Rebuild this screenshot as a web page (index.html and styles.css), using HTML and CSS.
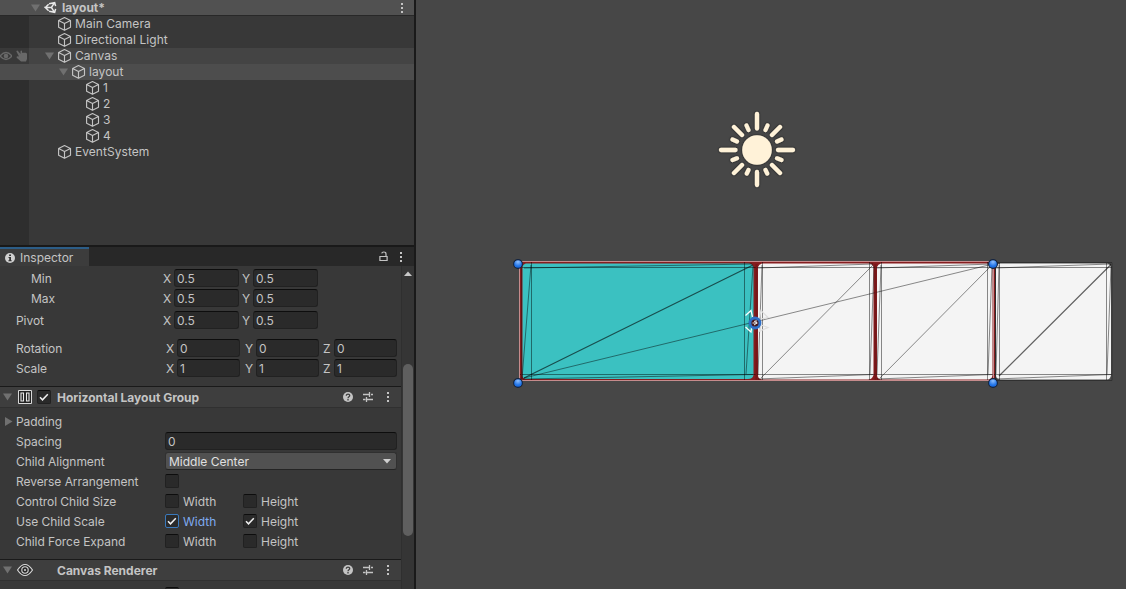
FILE: index.html
```html
<!DOCTYPE html>
<html lang="en">
<head>
  <meta charset="UTF-8" />
  <title>layout</title>
  <link rel="stylesheet" href="styles.css">
</head>
<body>
  <svg class="defs" width="0" height="0">
    <symbol id="cube" viewBox="0 0 14 14">
      <path d="M6.500 .6 12.500 3.400V10.300L6.500 13.300 .6 10.300V3.400ZM.6 3.400 6.500 6.400 12.500 3.400M6.500 6.400V13.300" fill="none" stroke="#c4c4c4" stroke-width="1.15" stroke-linejoin="round"/>
    </symbol>
    <symbol id="down" viewBox="0 0 9 8"><path d="M0 .5H9L4.5 7.5Z" fill="#707070"/></symbol>
    <symbol id="right" viewBox="0 0 9 9"><path d="M1 0V9L8.5 4.5Z" fill="#707070"/></symbol>
    <symbol id="dots" viewBox="0 0 4 12"><path d="M1 1h2v2H1zM1 5h2v2H1zM1 9h2v2H1z" fill="#c4c4c4"/></symbol>
    <symbol id="check" viewBox="0 0 14 14"><path d="M3 7.3 5.5 9.8 10.8 4.2" fill="none" stroke="#f0f0f0" stroke-width="1.5"/></symbol>
    <symbol id="help" viewBox="0 0 10 10">
      <circle cx="5" cy="5" r="5" fill="#c4c4c4"/>
      <path d="M3.3 3.8C3.3 1.6 6.8 1.7 6.7 3.7 6.6 4.8 5 4.7 5 6.2M5 7.1V8.4" fill="none" stroke="#3e3e3e" stroke-width="1.3"/>
    </symbol>
    <symbol id="preset" viewBox="0 0 10 10">
      <path d="M0 2.500H6M8 2.500H10M6.500 0V5M0 7.500H2.500M4 7.500H10M3.500 5V10" fill="none" stroke="#c4c4c4" stroke-width="1.300"/>
    </symbol>
  </svg>

  <div class="editor">
    <aside class="side">
      <section class="hierarchy">
        <div class="scene-row">
          <svg class="fold"><use href="#down"/></svg>
          <svg class="unity" viewBox="0 0 14 14">
            <path d="M1.500 7 5 3.500M5.500 3 11.500 1.800 12.500 5.500M12.500 8.500 11.500 12.200 5.500 11M5 10.500 1.500 7H8L11 2.300M8 7 11 11.700" fill="none" stroke="#e8e8e8" stroke-width="1.600"/>
          </svg>
          <b>layout*</b>
          <svg class="dots"><use href="#dots"/></svg>
        </div>
        <div class="tree">
          <div class="item"><svg class="cube"><use href="#cube"/></svg>Main Camera</div>
          <div class="item"><svg class="cube"><use href="#cube"/></svg>Directional Light</div>
          <div class="item hover">
            <span class="vis">
              <svg width="12" height="10" viewBox="0 0 12 10"><path d="M0 5Q6-2 12 5 6 12 0 5Z" fill="none" stroke="#686868" stroke-width="1.300"/><circle cx="6" cy="5" r="2.300" fill="#686868"/></svg>
              <svg width="12" height="12" viewBox="0 0 12 12"><path d="M.3 1.200Q1.200 0 2.200 1.200L4.500 4V1Q5.300 0 6 1V3Q7 2 8 3 9 2 10 3 11 3 11 4V9L10 11.500H5L1 8Q-.2 6.500 1.800 6.300L3 6.500Z" fill="#686868"/></svg>
            </span>
            <svg class="fold"><use href="#down"/></svg><svg class="cube"><use href="#cube"/></svg>Canvas
          </div>
          <div class="item l2 selected"><svg class="fold"><use href="#down"/></svg><svg class="cube"><use href="#cube"/></svg>layout</div>
          <div class="item l3"><svg class="cube"><use href="#cube"/></svg>1</div>
          <div class="item l3"><svg class="cube"><use href="#cube"/></svg>2</div>
          <div class="item l3"><svg class="cube"><use href="#cube"/></svg>3</div>
          <div class="item l3"><svg class="cube"><use href="#cube"/></svg>4</div>
          <div class="item"><svg class="cube"><use href="#cube"/></svg>EventSystem</div>
        </div>
      </section>

      <section class="inspector">
        <div class="tabs">
          <div class="tab">
            <svg width="10" height="10" viewBox="0 0 10 10"><circle cx="5" cy="5" r="5" fill="#d0d0d0"/><path d="M4.100 1.500H6V3.100H4.100ZM3.500 4H6V7.200H6.700V8.300H3.400V7.200H4.200V5.100H3.500Z" fill="#333"/></svg>
            Inspector
          </div>
          <svg class="lock" viewBox="0 0 9 11"><path d="M.9 5.500H8.100V9.500H.9ZM7 5.500V3Q7 1 4.800 1 3 1 2.700 2.400" fill="none" stroke="#c4c4c4" stroke-width="1.200"/></svg>
          <svg class="dots"><use href="#dots"/></svg>
        </div>
        <div class="inspector-body">
          <div class="props">
            <div class="row indent"><label>Min</label><div class="vec two"><i>X</i><span class="field">0.5</span><i>Y</i><span class="field">0.5</span></div></div>
            <div class="row indent"><label>Max</label><div class="vec two"><i>X</i><span class="field">0.5</span><i>Y</i><span class="field">0.5</span></div></div>
            <div class="row pivot"><label>Pivot</label><div class="vec two"><i>X</i><span class="field">0.5</span><i>Y</i><span class="field">0.5</span></div></div>
            <div class="row rotation"><label>Rotation</label><div class="vec"><i>X</i><span class="field">0</span><i>Y</i><span class="field">0</span><i>Z</i><span class="field">0</span></div></div>
            <div class="row"><label>Scale</label><div class="vec"><i>X</i><span class="field">1</span><i>Y</i><span class="field">1</span><i>Z</i><span class="field">1</span></div></div>

            <div class="component">
              <svg class="fold"><use href="#down"/></svg>
              <svg class="kind" viewBox="0 0 16 16"><path d="M1.500 1.500H14.500V14.500H1.500Z" fill="#222" stroke="#d8d8d8"/><path d="M4 4H6.500V12H4ZM9.500 4H12V12H9.500Z" fill="none" stroke="#e8e8e8" stroke-width="1.100"/></svg>
              <span class="box"><svg><use href="#check"/></svg></span>
              <b>Horizontal Layout Group</b>
              <svg class="act"><use href="#help"/></svg>
              <svg class="act"><use href="#preset"/></svg>
              <svg class="dots"><use href="#dots"/></svg>
            </div>
            <div class="row padding"><svg class="fold-right"><use href="#right"/></svg><label>Padding</label></div>
            <div class="row"><label>Spacing</label><span class="field wide">0</span></div>
            <div class="row"><label>Child Alignment</label><span class="dropdown">Middle Center<svg width="8" height="5" viewBox="0 0 8 5"><path d="M0 0H8L4 4.500Z" fill="#d0d0d0"/></svg></span></div>
            <div class="row"><label>Reverse Arrangement</label><span class="box"></span></div>
            <div class="row"><label>Control Child Size</label><div class="toggle"><span class="box"></span>Width</div><div class="toggle"><span class="box"></span>Height</div></div>
            <div class="row"><label>Use Child Scale</label><div class="toggle focus"><span class="box"><svg><use href="#check"/></svg></span>Width</div><div class="toggle"><span class="box"><svg><use href="#check"/></svg></span>Height</div></div>
            <div class="row"><label>Child Force Expand</label><div class="toggle"><span class="box"></span>Width</div><div class="toggle"><span class="box"></span>Height</div></div>

            <div class="component renderer">
              <svg class="fold"><use href="#down"/></svg>
              <svg class="kind" viewBox="0 0 16 16"><path d="M.5 8Q8-3 15.500 8 8 19 .5 8Z" fill="#2a2a2a" stroke="#d8d8d8" stroke-width="1.200"/><circle cx="8" cy="8" r="3.200" fill="none" stroke="#d8d8d8" stroke-width="1.100"/><circle cx="8" cy="8" r="1" fill="#d8d8d8"/></svg>
              <b>Canvas Renderer</b>
              <svg class="act"><use href="#help"/></svg>
              <svg class="act"><use href="#preset"/></svg>
              <svg class="dots"><use href="#dots"/></svg>
            </div>
            <div class="row last"><label></label><span class="box"></span></div>
          </div>
          <div class="scrollbar">
            <svg width="8" height="5" viewBox="0 0 8 5"><path d="M0 5H8L4 .5Z" fill="#c8c8c8"/></svg>
            <div class="thumb"></div>
          </div>
        </div>
      </section>
    </aside>

    <main class="scene">
      <svg width="710" height="589" viewBox="416 0 710 589">
        <defs>
          <radialGradient id="knob" cx=".5" cy=".25" r=".8"><stop offset="0" stop-color="#8fc0ff"/><stop offset=".6" stop-color="#2275e8"/><stop offset="1" stop-color="#1262dc"/></radialGradient>
          <filter id="glow" x="-20%" y="-20%" width="140%" height="140%"><feDropShadow dx="0" dy="0" stdDeviation="1" flood-color="#111" flood-opacity=".8"/></filter>
        </defs>

        <!-- directional light gizmo -->
        <g filter="url(#glow)" fill="#fff2d8" stroke="#fff2d8" stroke-linecap="round">
          <circle cx="757" cy="150" r="14.800" stroke="none"/>
          <path d="M757 114V128.500M757 172V185M721 150H735.500M778 150H793M734 127 742 135M780 127 772 135M734 173 742 165M780 173 772 165" stroke-width="4.300"/>
          <path d="M746.500 125.500 748.500 130M767.500 125.500 765.500 130M748.500 170 746.800 173.500M765.500 170 767.200 173.500M732.500 139.500 737 141.500M781.500 139.500 777 141.500M732.500 160 737 158.300M781.500 160 777 158.300" stroke-width="4.200"/>
        </g>

        <!-- layout children -->
        <path d="M520 262H995V380.500H520Z" fill="#861d1f"/>
        <path d="M995 262H1112.500V380.500H995Z" fill="#505050"/>
        <path d="M526 263.500H749Q753.500 264 753.500 268V375Q753 379 748 379H526Q522.500 379 522.500 375V267Q523 264 526 263.500Z" fill="#3bc1c1"/>
        <path d="M762 263.500H869Q873.500 264 873.500 268V375Q872 379.500 868 379.500H762Q758 379 758 375V267Q759 264 762 263.500Z" fill="#f4f4f4"/>
        <path d="M881 263.500H988Q992.500 264 992.500 268V375Q992 379.500 988 379.500H881Q877 379 877 375V267Q878 264 881 263.500Z" fill="#f4f4f4"/>
        <path d="M1000 263.500H1107Q1111 264 1111 268V375Q1110 379.500 1107 379.500H1000Q996 379 996 375V267Q997 264 1000 263.500Z" fill="#f4f4f4"/>

        <!-- wireframe -->
        <g class="wire">
          <path d="M521 267.500H1112M520 374.500H1112M531.500 262V380M744.500 262V380M762.500 262V380M869.500 262V380M881.500 262V380M987.500 262V380M999.500 262V380M1106.500 262V380"/>
          <path d="M522 379 531 265M746 374 753 266M758 375 762 265M870 374 874 266M877 374 881 265M988 374 992 266M996 374 999 265M1107 374 1111 266"/>
          <path d="M524 268 752 264M523 379 753 374.500M758 268 873 264M758 379 873 374.500M877 268 992 264M877 379 992 374.500M995 268 1111 264M995 379 1111 374.500"/>
          <path d="M524 378 993 264"/>
          <path d="M761 378 873 265M880 378 992 265"/>
          <path class="strong" d="M524 378 753 265M999 376 1111 264.500"/>
        </g>
        <path d="M756.500 264V380M875.500 264V380" stroke="#751719" stroke-width="2"/>
        <path d="M995.500 263V380" stroke="#2c2c2c"/>
        <path d="M519.500 262V380.500H993.500V261.500H519.500" fill="none" stroke="#c68b8c"/>
        <path d="M521.500 263V379" stroke="#541719"/>
        <path d="M995 262.500H1112V380.500H995" fill="none" stroke="#303030"/>

        <!-- pivot and rect handles -->
        <g fill="none" stroke-width="1.200">
          <path d="M745.500 315.500 751 310.500 752.500 317M745.500 327 751 332 752 326" stroke="#fff"/>
          <path d="M759.500 317 761 310.500 768 317.500 761 319M759 331.500 761 325 768 327.500Z" stroke="#dedede"/>
        </g>
        <circle cx="755" cy="323" r="5" fill="#451a20" stroke="#2f70c8" stroke-width="2.800"/>
        <path d="M752.500 323H757.500M754 321 757 323 754 325M756 320V322" fill="none" stroke="#eee"/>
        <g fill="url(#knob)" stroke="#14233c" stroke-width="1.100">
          <circle cx="518" cy="264" r="4.400"/><circle cx="993" cy="264" r="4.400"/>
          <circle cx="518" cy="383" r="4.400"/><circle cx="993" cy="383" r="4.400"/>
        </g>
      </svg>
    </main>
  </div>
</body>
</html>
```
FILE: styles.css
```css
body {
  margin: 0;
  font-family: Inter, "Liberation Sans", sans-serif;
  font-size: 12px;
  color: #c4c4c4;
  background: #474747;
  overflow: hidden;
}

svg {
  display: block;
  flex: none;
}

.defs {
  position: absolute;
}

.editor {
  display: flex;
  height: 589px;
}

.side {
  width: 414px;
  border-right: 2px solid #1a1a1a;
  background: #383838;
  flex: none;
  display: flex;
  flex-direction: column;
}

/* hierarchy */
.hierarchy {
  height: 245px;
  flex: none;
  display: flex;
  flex-direction: column;
  border-bottom: 2px solid #191919;
}

.scene-row {
  height: 15px;
  display: flex;
  align-items: center;
  padding: 0 10px 0 31px;
  background: #515151;
  border-bottom: 1px solid #282828;
}

.fold {
  width: 9px;
  height: 8px;
}

.unity {
  width: 13px;
  height: 13px;
  margin: 0 5px 0 4px;
}

.dots {
  width: 4px;
  height: 12px;
}

.scene-row .dots {
  margin-left: auto;
}

.tree {
  flex: 1;
  background: linear-gradient(to right, #2e2e2e 29px, #383838 29px);
}

.item {
  height: 14px;
  display: flex;
  align-items: center;
  padding: 0 0 2px 58px;
  letter-spacing: .05px;
}

.item svg {
  margin-top: 2px;
}

.item .cube {
  width: 14px;
  height: 14px;
  margin-right: 3px;
}

.hover {
  background: linear-gradient(to right, #393939 29px, #444444 29px);
  padding-left: 0;
}

.vis {
  width: 45px;
  display: flex;
  align-items: center;
  gap: 4px;
}

.item .fold {
  margin-right: 4px;
}

.l2 {
  padding-left: 59px;
}

.l3 {
  padding-left: 86px;
}

.selected {
  background: #4d4d4d;
}

/* inspector */
.inspector {
  flex: 1;
  min-height: 0;
  display: flex;
  flex-direction: column;
}

.tabs {
  height: 19px;
  flex: none;
  display: flex;
  align-items: center;
  background: #282828;
  padding-right: 11px;
}

.tab {
  width: 84px;
  height: 17px;
  display: flex;
  align-items: center;
  gap: 5px;
  padding-left: 5px;
  margin-right: auto;
  background: #3c3c3c;
  border-top: 2px solid #2c5d87;
}

.lock {
  width: 9px;
  height: 11px;
  margin-right: 11px;
}

.inspector-body {
  flex: 1;
  min-height: 0;
  display: flex;
}

.props {
  width: 401px;
  padding-top: 3px;
  overflow: hidden;
}

.row {
  height: 20px;
  display: flex;
  padding-left: 16px;
}

.row label {
  width: 149px;
  line-height: 20px;
  letter-spacing: -.05px;
}

.indent {
  padding-left: 31px;
}

.indent label {
  width: 132px;
}

.vec {
  display: grid;
  grid-template-columns: 11px 68px 11px 67px 11px 63px;
  margin-left: 1px;
}

.vec i {
  font-style: normal;
  line-height: 20px;
}

.vec .field {
  width: 63px;
}

.vec.two {
  grid-template-columns: 11px 68px 11px 65px;
  margin-left: 0;
}

.vec.two .field {
  width: 65px;
}

.pivot label {
  width: 147px;
}

.field {
  box-sizing: border-box;
  height: 18px;
  line-height: 18px;
  padding-left: 2px;
  background: #2a2a2a;
  border: 1px solid #212121;
  border-top-color: #0d0d0d;
  border-radius: 3px;
}

.wide {
  width: 232px;
}

.pivot {
  margin-top: 2px;
}

.rotation {
  margin-top: 8px;
}

.component {
  box-sizing: border-box;
  height: 22px;
  margin: 7px 0 4px;
  padding: 0 11px 0 3px;
  display: flex;
  align-items: center;
  background: #3e3e3e;
  border-top: 1px solid #1a1a1a;
  border-bottom: 1px solid #303030;
}

.kind {
  width: 16px;
  height: 16px;
  margin: 0 4px 0 5px;
}

.component b {
  margin: 1px auto 0 6px;
}

.renderer b {
  margin-left: 20px;
}

.act {
  width: 10px;
  height: 10px;
  margin-right: 10px;
}

.component .dots {
  margin-left: 3px;
}

.padding {
  padding-left: 4px;
}

.fold-right {
  width: 9px;
  height: 9px;
  margin: 5px 3px 0 0;
}

.dropdown {
  box-sizing: border-box;
  width: 232px;
  height: 18px;
  display: flex;
  align-items: center;
  justify-content: space-between;
  padding: 0 5px 0 3px;
  color: #e0e0e0;
  background: #515151;
  border: 1px solid #303030;
  border-bottom-color: #242424;
  border-radius: 3px;
}

.box {
  box-sizing: border-box;
  width: 14px;
  height: 14px;
  flex: none;
  background: #2a2a2a;
  border: 1px solid #212121;
  border-top-color: #0d0d0d;
  border-radius: 2px;
}

.box svg {
  width: 14px;
  height: 14px;
  margin: -1px;
}

.row > .box,
.toggle .box {
  margin-top: 2px;
}

.toggle {
  width: 78px;
  display: flex;
  gap: 4px;
  line-height: 20px;
}

.focus {
  color: #7fabf0;
}

.focus .box {
  border-color: #3a79bb;
}

.scrollbar {
  width: 12px;
  border-left: 1px solid #2f2f2f;
  background: #353535;
}

.scrollbar svg {
  margin: 5px 0 0 2px;
}

.thumb {
  width: 10px;
  height: 172px;
  margin: 88px 0 0 1px;
  border-radius: 5px;
  background: #5f5f5f;
}

/* scene view */
.scene {
  flex: 1;
  background: #474747;
}

.wire {
  fill: none;
  stroke: #000;
  stroke-opacity: .5;
  stroke-width: .9;
}

.wire .strong {
  stroke-opacity: .6;
  stroke-width: 1.2;
}
```
